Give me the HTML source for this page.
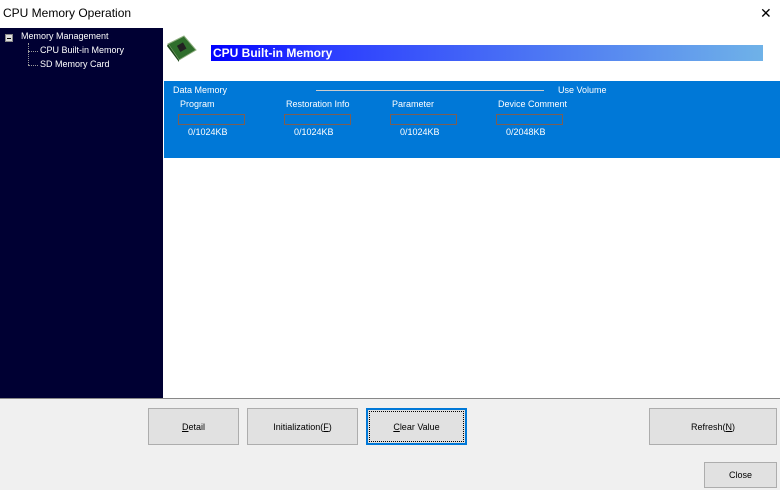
<!DOCTYPE html>
<html><head><style>
*{margin:0;padding:0;box-sizing:border-box}
body{width:780px;height:490px;position:relative;background:#fff;font-family:"Liberation Sans",sans-serif;overflow:hidden}
.a{position:absolute}
.t{font-size:9px;color:#fff;white-space:nowrap}
.btn{position:absolute;background:#e1e1e1;border:1px solid #adadad;font-size:9px;color:#000;display:flex;align-items:center;justify-content:center}
.box{position:absolute;width:67px;height:11px;border:1px solid #7a5f55}
</style></head><body>
<div class="a" style="left:3px;top:6px;font-size:12px;color:#000">CPU Memory Operation</div>
<div class="a" style="left:760px;top:5px;font-size:14px;color:#000;font-weight:300">✕</div>
<div class="a" style="left:0;top:28px;width:163px;height:370px;background:#000033"></div>
<div class="a" style="left:5px;top:34px;width:8px;height:8px;background:#ddd;border:1px solid #888"></div>
<div class="a" style="left:7px;top:38px;width:4px;height:1px;background:#000"></div>
<div class="a" style="left:28px;top:43px;width:1px;height:22px;border-left:1px dotted #999"></div>
<div class="a" style="left:28px;top:51px;width:10px;border-top:1px dotted #999"></div>
<div class="a" style="left:28px;top:65px;width:10px;border-top:1px dotted #999"></div>
<div class="a t" style="left:21px;top:31px">Memory Management</div>
<div class="a t" style="left:40px;top:45px">CPU Built-in Memory</div>
<div class="a t" style="left:40px;top:59px">SD Memory Card</div>
<svg class="a" style="left:166px;top:34px" width="32" height="28" viewBox="0 0 32 28">
<polygon points="2,10 18,2 30,16 13,26" fill="#2f6e2c" stroke="#8fae80" stroke-width="1"/>
<rect x="12" y="10" width="7" height="7" fill="#222" transform="rotate(-30 15 13)"/>
<polygon points="2,10 13,26 13,28 1,12" fill="#1f4a1c"/>
</svg>
<div class="a" style="left:211px;top:45px;width:552px;height:16px;background:linear-gradient(90deg,#0000ff 0%,#2b3cff 20%,#6fb2e8 100%)"></div>
<div class="a" style="left:213px;top:46px;font-size:12px;color:#fff;font-weight:bold">CPU Built-in Memory</div>
<div class="a" style="left:164px;top:81px;width:616px;height:77px;background:#0078d7"></div>
<div class="a t" style="left:173px;top:85px">Data Memory</div>
<div class="a" style="left:316px;top:90px;width:228px;height:1px;background:#ccc"></div>
<div class="a t" style="left:558px;top:85px">Use Volume</div>
<div class="a t" style="left:180px;top:99px">Program</div>
<div class="a t" style="left:286px;top:99px">Restoration Info</div>
<div class="a t" style="left:392px;top:99px">Parameter</div>
<div class="a t" style="left:498px;top:99px">Device Comment</div>
<div class="box" style="left:178px;top:114px"></div>
<div class="box" style="left:284px;top:114px"></div>
<div class="box" style="left:390px;top:114px"></div>
<div class="box" style="left:496px;top:114px"></div>
<div class="a t" style="left:188px;top:127px">0/1024KB</div>
<div class="a t" style="left:294px;top:127px">0/1024KB</div>
<div class="a t" style="left:400px;top:127px">0/1024KB</div>
<div class="a t" style="left:506px;top:127px">0/2048KB</div>
<div class="a" style="left:0;top:398px;width:780px;height:92px;background:#f0f0f0;border-top:1px solid #888"></div>
<div class="btn" style="left:148px;top:408px;width:91px;height:37px"><u>D</u>etail</div>
<div class="btn" style="left:247px;top:408px;width:111px;height:37px">Initialization(<u>F</u>)</div>
<div class="btn" style="left:366px;top:408px;width:101px;height:37px;border:2px solid #0078d7;outline:1px dotted #000;outline-offset:-4px"><u>C</u>lear Value</div>
<div class="btn" style="left:649px;top:408px;width:128px;height:37px">Refresh(<u>N</u>)</div>
<div class="btn" style="left:704px;top:462px;width:73px;height:26px">Close</div>
</body></html>
